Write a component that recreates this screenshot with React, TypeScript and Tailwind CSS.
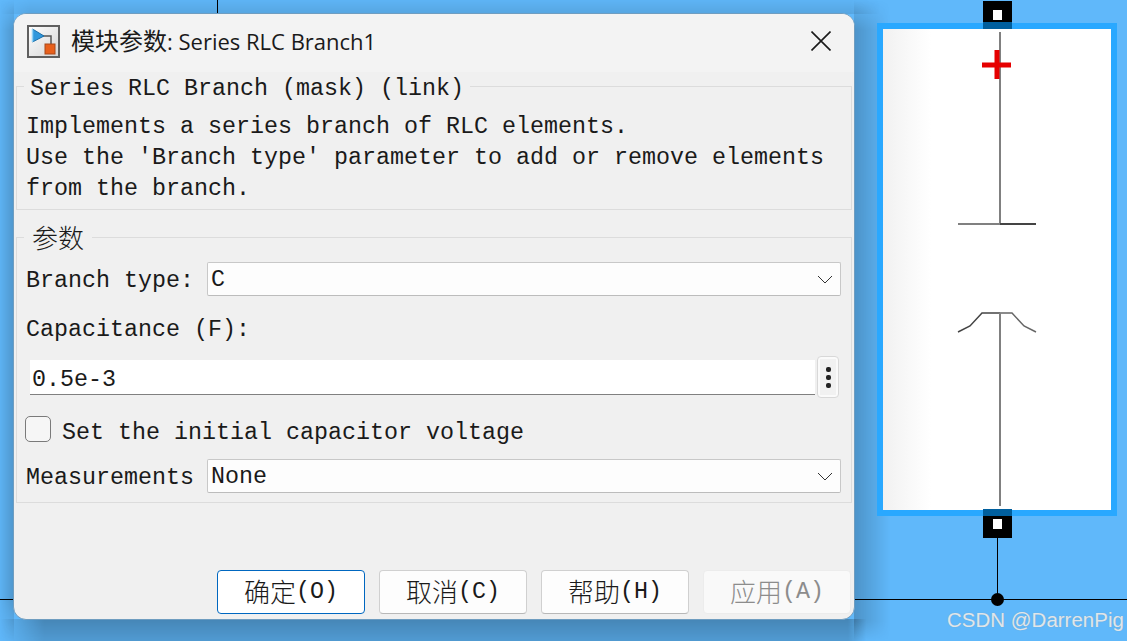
import React from "react";

const Cjk = ({ children, className = "" }: { children: React.ReactNode; className?: string }) => (
  <span className={"font-['Noto_Sans_CJK_SC'] text-[26px] font-light " + className}>{children}</span>
);

const Chevron = () => (
  <svg width="16" height="9" viewBox="0 0 16 9" className="shrink-0">
    <path d="M1 1 L8 8 L15 1" fill="none" stroke="#333" strokeWidth="1" />
  </svg>
);

const Select = ({ value }: { value: string }) => (
  <div className="flex h-[34px] w-[634px] items-center justify-between rounded-[2px] border border-[#c8c8c8] border-b-[#bcbcbc] bg-[#fdfdfd] pl-[3px] pr-[7px]">
    <span className="pt-[4px] leading-none">{value}</span>
    <Chevron />
  </div>
);

const Btn = ({ children, label, kind = "normal" }: { children: React.ReactNode; label: string; kind?: "normal" | "primary" | "disabled" }) => {
  const cls =
    kind === "primary"
      ? "border-[#0067c0] bg-white text-[#1a1a1a]"
      : kind === "disabled"
        ? "border-[#ececec] bg-[#f9f9f9] text-[#8c8c8c]"
        : "border-[#d0d0d0] border-b-[#b8b8b8] bg-[#fdfdfd] text-[#1a1a1a]";
  return (
    <div className={"flex h-[44px] w-[148px] items-center justify-center rounded-[4px] border " + cls}>
      <Cjk className="pb-[4px]">{children}</Cjk>
      <span className="pt-[1px]">{label}</span>
    </div>
  );
};

const AppIcon = () => (
  <svg width="33" height="33" viewBox="0 0 33 33" className="shrink-0">
    <defs>
      <linearGradient id="ig" x1="0" y1="0" x2="1" y2="1">
        <stop offset="0" stopColor="#ffffff" />
        <stop offset="1" stopColor="#d4d4d4" />
      </linearGradient>
    </defs>
    <rect x="1" y="1" width="31" height="31" fill="url(#ig)" stroke="#5f5f5f" strokeWidth="2" />
    <path d="M14 11 H24 V20" fill="none" stroke="#555" strokeWidth="1.5" />
    <path d="M5.5 4 L17 11 L5.5 17 Z" fill="#2f97dc" stroke="#1d6fa8" strokeWidth="1" />
    <path d="M5.5 4 V17" stroke="#8fd0f5" strokeWidth="1.5" />
    <rect x="18" y="19" width="10" height="10" fill="#e8601c" stroke="#a8481a" strokeWidth="1" />
  </svg>
);

export default function App() {
  return (
    <div className="relative h-[641px] w-[1127px] overflow-hidden bg-[#60b8fa]">
      {/* dialog's cast shadow, one soft strip per side */}
      <div className="absolute left-0 top-0 h-[14px] w-[880px] bg-[linear-gradient(180deg,rgba(0,0,0,0.02),rgba(0,0,0,0.1))] [mask-image:linear-gradient(90deg,transparent,black_30px,black_calc(100%-30px),transparent)]" />
      <div className="absolute left-0 top-0 h-[641px] w-[14px] bg-[linear-gradient(90deg,rgba(0,0,0,0.03),rgba(0,0,0,0.18))] [mask-image:linear-gradient(180deg,transparent,black_30px,black_calc(100%-40px),transparent)]" />
      <div className="absolute left-[854px] top-0 h-[641px] w-[36px] bg-[linear-gradient(90deg,rgba(0,0,0,0.2),transparent)] [mask-image:linear-gradient(180deg,transparent,black_30px,black_calc(100%-20px),transparent)]" />
      <div className="absolute bottom-0 left-0 h-[22px] w-[866px] bg-[linear-gradient(180deg,rgba(0,0,0,0.27),rgba(0,0,0,0.16))] [mask-image:linear-gradient(90deg,transparent,black_44px,black_calc(100%-18px),transparent)]" />

      {/* canvas wires */}
      <div className="absolute left-[217px] top-0 h-[20px] w-px bg-black" />
      <div className="absolute left-0 top-[599px] h-px w-full bg-black" />
      <div className="absolute left-[997px] top-[536px] h-[64px] w-px bg-black" />
      <div className="absolute left-[991px] top-[593px] h-[13px] w-[13px] rounded-full bg-black" />

      {/* block */}
      <div className="absolute left-[877px] top-[23px] h-[493px] w-[240px] border-[6px] border-[#29a8ff] bg-[linear-gradient(90deg,#f1f1f1_0,#ffffff_48px)]">
        <svg width="228" height="481" viewBox="0 0 228 481" className="block">
          <path d="M117 3 V195" stroke="#808080" strokeWidth="2" fill="none" />
          <path d="M75 195 H117" stroke="#808080" strokeWidth="2" fill="none" />
          <path d="M117 195 H153" stroke="#444" strokeWidth="2" fill="none" />
          <path d="M75 303 L87 297 L99 284 H117" stroke="#444" strokeWidth="1.5" fill="none" />
          <path d="M117 284 H129 L141 297 L153 303" stroke="#666" strokeWidth="1.5" fill="none" />
          <path d="M117 284 V477" stroke="#808080" strokeWidth="2" fill="none" />
          <path d="M99 36 H128 M114 21 V50" stroke="#e60000" strokeWidth="5" fill="none" />
        </svg>
      </div>
      <div className="absolute left-[983px] top-px flex h-[22px] w-[29px] items-start justify-center bg-black pt-[9px]">
        <div className="h-[10px] w-[9px] bg-white" />
      </div>
      <div className="absolute left-[983px] top-[22px] h-[7px] w-[29px] bg-[#005f9e]" />
      <div className="absolute left-[983px] top-[509px] h-[7px] w-[29px] bg-[#005f9e]" />
      <div className="absolute left-[983px] top-[516px] flex h-[22px] w-[29px] items-start justify-center bg-black pt-[3px]">
        <div className="h-[10px] w-[9px] bg-white" />
      </div>

      <div className="absolute left-[947px] top-[607px] font-['Liberation_Sans',sans-serif] text-[20.5px] leading-[26px] text-[#dfe6ec] [text-shadow:0_0_1px_#7f9fb8]">
        CSDN @DarrenPig
      </div>

      {/* dialog */}
      <div className="absolute left-[13px] top-[13px] flex h-[607px] w-[842px] flex-col rounded-[13px] border border-[#6f9dc0] bg-[#f0f0f0] font-['Liberation_Mono','Noto_Sans_CJK_SC',monospace] text-[23.33px] leading-[31px] text-[#1a1a1a]">
        <div className="flex h-[58px] items-center rounded-t-[12px] bg-[#f3f3f3] pb-[4px] pl-[13px] pr-[23px]">
          <AppIcon />
          <span className="ml-[11px] font-['Open_Sans','Noto_Sans_CJK_SC',sans-serif] text-[22px] text-[#1a1a1a]">
            <span className="text-[24px]">模块参数</span>: Series RLC Branch1
          </span>
          <svg width="20" height="20" viewBox="0 0 20 20" className="ml-auto shrink-0">
            <path d="M0.5 0.5 L19.5 19.5 M19.5 0.5 L0.5 19.5" stroke="#1a1a1a" strokeWidth="1.6" fill="none" />
          </svg>
        </div>

        <div className="flex flex-col gap-[13px] px-[2px]">
          <fieldset className="h-[138px] border border-[#dcdcdc] pl-[9px]">
            <legend className="ml-[-2px] h-[28px] px-[6px] pt-[3px] leading-[28px]">Series RLC Branch (mask) (link)</legend>
            <div className="pt-[12px]">
              <div>Implements a series branch of RLC elements.</div>
              <div>Use the 'Branch type' parameter to add or remove elements</div>
              <div>from the branch.</div>
            </div>
          </fieldset>

          <fieldset className="h-[280px] border border-[#dcdcdc] pl-[9px]">
            <legend className="ml-[-2px] h-[28px] px-[8px] leading-[28px]">
              <Cjk>参数</Cjk>
            </legend>
            <div className="flex flex-col pt-[10px]">
              <div className="flex items-center">
                <span className="w-[181px] pt-[5px]">Branch type:</span>
                <Select value="C" />
              </div>
              <div className="pt-[18px]">Capacitance (F):</div>
              <div className="flex items-center pl-[4px] pt-[10px]">
                <div className="flex h-[35px] w-[785px] items-center border-b border-[#808080] bg-white pl-[2px] pt-[7px]">
                  0.5e-3
                </div>
                <div className="ml-[2px] flex h-[42px] w-[22px] items-stretch rounded-[4px] border border-[#d8d8d8] bg-[#fafafa] p-[2px]">
                  <div className="flex flex-1 flex-col items-center justify-center gap-[3px] bg-[#f1f1f1]">
                    <div className="h-[5px] w-[5px] rounded-[2px] bg-[#222]" />
                    <div className="h-[5px] w-[5px] rounded-[2px] bg-[#222]" />
                    <div className="h-[5px] w-[5px] rounded-[2px] bg-[#222]" />
                  </div>
                </div>
              </div>
              <div className="flex items-center pt-[14px]">
                <div className="-ml-px mb-[4px] h-[26px] w-[26px] rounded-[5px] border border-[#7a7a7a] bg-[#f6f6f6]" />
                <span className="ml-[11px] pt-[6px]">Set the initial capacitor voltage</span>
              </div>
              <div className="flex items-center pt-[9px]">
                <span className="w-[181px] pt-[5px]">Measurements</span>
                <Select value="None" />
              </div>
            </div>
          </fieldset>
        </div>

        <div className="mt-auto flex justify-end gap-[14px] pb-[5px] pr-[3px]">
          <Btn kind="primary" label="(O)">确定</Btn>
          <Btn label="(C)">取消</Btn>
          <Btn label="(H)">帮助</Btn>
          <Btn kind="disabled" label="(A)">应用</Btn>
        </div>
      </div>
    </div>
  );
}
